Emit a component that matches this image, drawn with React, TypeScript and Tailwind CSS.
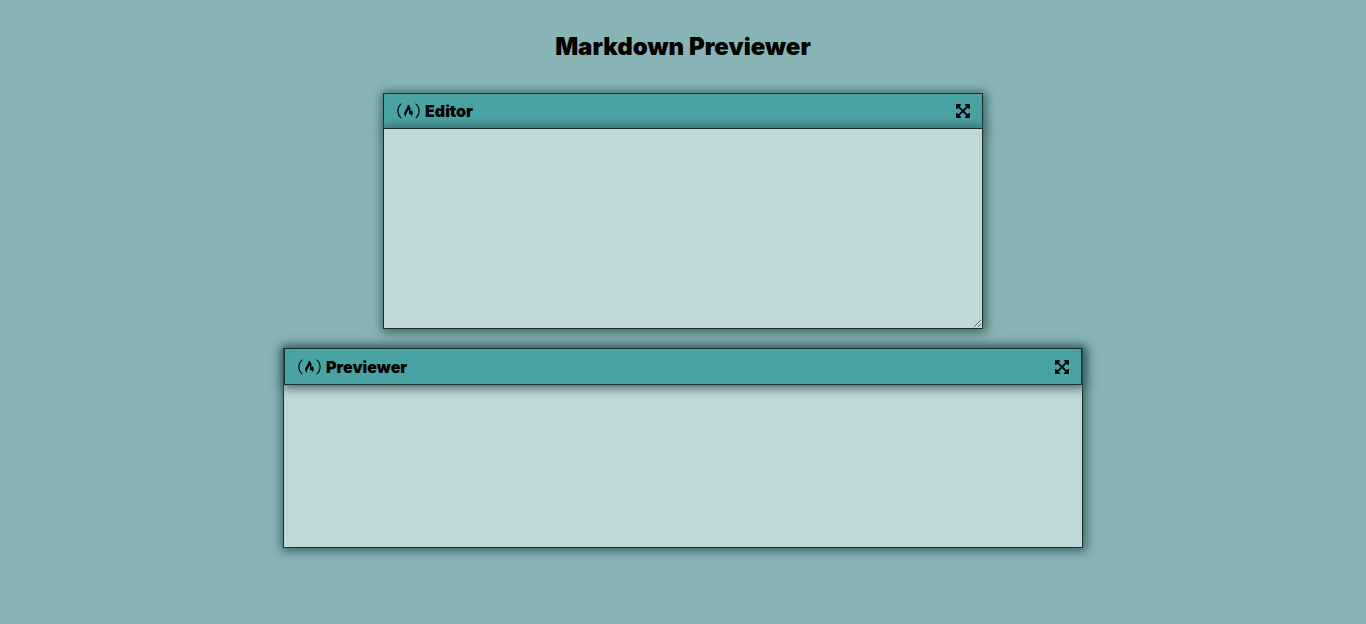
import { useState } from "react";
import { FaExpandArrowsAlt, FaFreeCodeCamp } from "react-icons/fa";

type ToolbarProps = { title: string; labelId: string; className: string };

function Toolbar({ title, labelId, className }: ToolbarProps) {
  return (
    <div
      className={`flex items-center justify-between border-[#1d2e2e] bg-[#4aa3a3] pr-[11px] pl-3 shadow-[1px_1px_10px_2px_#3a5f5f] ${className}`}
    >
      <h2 id={labelId} className="flex items-center gap-1 text-base font-black">
        <FaFreeCodeCamp className="h-5 w-[25px]" aria-hidden="true" />
        {title}
      </h2>
      <button type="button" aria-label={`Maximize ${title}`}>
        <FaExpandArrowsAlt className="size-4" />
      </button>
    </div>
  );
}

export default function App() {
  const [text, setText] = useState("");
  return (
    <main className="flex min-h-screen flex-col items-center bg-[#87b5b5] px-4 font-['Inter',sans-serif] text-black">
      <h1 className="mt-7 mb-7 text-2xl/[37px] font-black">Markdown Previewer</h1>
      <section className="flex w-full max-w-[600px] flex-col">
        <Toolbar title="Editor" labelId="editor-title" className="h-[35px] border border-b-0" />
        <textarea
          aria-labelledby="editor-title"
          className="block h-[201px] min-h-[100px] w-full resize-y rounded-none border border-[#1d2e2e] bg-[#c0d8d8] p-1 text-sm shadow-[1px_1px_10px_2px_#3a5f5f] outline-none"
          value={text}
          onChange={(e) => setText(e.target.value)}
        />
      </section>
      <section
        aria-labelledby="preview-title"
        className="mt-[19px] min-h-[200px] w-full max-w-[800px] border border-t-0 border-[#1d2e2e] bg-[#c0d8d8] shadow-[1px_1px_10px_2px_#3a5f5f]"
      >
        <Toolbar title="Previewer" labelId="preview-title" className="h-[37px] border" />
        <div className="p-4 whitespace-pre-wrap">{text}</div>
      </section>
    </main>
  );
}
